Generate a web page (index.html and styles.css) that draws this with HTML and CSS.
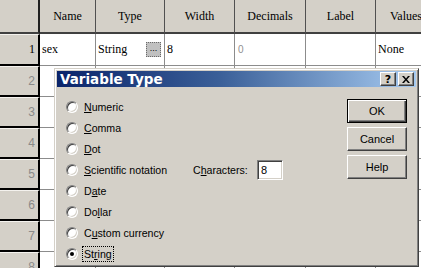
FILE: index.html
```html
<!DOCTYPE html>
<html>
<head>
<meta charset="utf-8">
<link rel="stylesheet" href="styles.css">
</head>
<body>
<div class="screen">
  <div class="grid">
    <div class="hd corner"></div>
    <div class="hd">Name</div>
    <div class="hd">Type</div>
    <div class="hd">Width</div>
    <div class="hd">Decimals</div>
    <div class="hd">Label</div>
    <div class="hd last">Values</div>

    <div class="rh first">1</div>
    <div class="cell">sex</div>
    <div class="cell type"><span>String</span><span class="ell">...</span></div>
    <div class="cell">8</div>
    <div class="cell dec">0</div>
    <div class="cell"></div>
    <div class="cell">None</div>

    <div class="rh">2</div><div class="cell"></div><div class="cell"></div><div class="cell"></div><div class="cell"></div><div class="cell"></div><div class="cell"></div>
    <div class="rh">3</div><div class="cell"></div><div class="cell"></div><div class="cell"></div><div class="cell"></div><div class="cell"></div><div class="cell"></div>
    <div class="rh">4</div><div class="cell"></div><div class="cell"></div><div class="cell"></div><div class="cell"></div><div class="cell"></div><div class="cell"></div>
    <div class="rh">5</div><div class="cell"></div><div class="cell"></div><div class="cell"></div><div class="cell"></div><div class="cell"></div><div class="cell"></div>
    <div class="rh">6</div><div class="cell"></div><div class="cell"></div><div class="cell"></div><div class="cell"></div><div class="cell"></div><div class="cell"></div>
    <div class="rh">7</div><div class="cell"></div><div class="cell"></div><div class="cell"></div><div class="cell"></div><div class="cell"></div><div class="cell"></div>
    <div class="rh">8</div><div class="cell"></div><div class="cell"></div><div class="cell"></div><div class="cell"></div><div class="cell"></div><div class="cell"></div>
  </div>

  <div class="dialog">
    <div class="titlebar">
      <span class="title">Variable Type</span>
      <span class="tbtns">
        <span class="tbtn">?</span>
        <span class="tbtn x">
          <svg width="8" height="7" viewBox="0 0 8 7"><path d="M0 0h2l2 2.5L6 0h2L5 3.5 8 7H6L4 4.5 2 7H0l3-3.5z" fill="#000"/></svg>
        </span>
      </span>
    </div>
    <div class="body">
      <div class="options">
        <label class="opt r1"><span class="radio"></span><span><u>N</u>umeric</span></label>
        <label class="opt r2"><span class="radio"></span><span><u>C</u>omma</span></label>
        <label class="opt r3"><span class="radio"></span><span><u>D</u>ot</span></label>
        <label class="opt r4"><span class="radio"></span><span><u>S</u>cientific notation</span></label>
        <label class="opt r5"><span class="radio"></span><span>D<u>a</u>te</span></label>
        <label class="opt r6"><span class="radio"></span><span>Do<u>l</u>lar</span></label>
        <label class="opt r7"><span class="radio"></span><span>C<u>u</u>stom currency</span></label>
        <label class="opt r8"><span class="radio on"></span><span class="focus">St<u>r</u>ing</span></label>
        <div class="chars">
          <span class="clabel">C<u>h</u>aracters:</span>
          <span class="field">8</span>
        </div>
      </div>
      <div class="buttons">
        <span class="btn default">OK</span>
        <span class="btn">Cancel</span>
        <span class="btn">Help</span>
      </div>
    </div>
  </div>
</div>
</body>
</html>
```

FILE: styles.css
```css
html, body {
  margin: 0;
  padding: 0;
  background: #fff;
}

.screen {
  position: relative;
  width: 421px;
  height: 268px;
  overflow: hidden;
  background: #fff;
}

.grid {
  display: grid;
  grid-template-columns: 40px 56px 69px 70px 71px 70px 62px;
  grid-template-rows: 34px 32px repeat(7, 31px);
  width: 438px;
  font-family: "Liberation Serif", serif;
  font-size: 12px;
  color: #000;
}

.hd {
  box-sizing: border-box;
  background: #d4d0c8;
  border-right: 1px solid #505050;
  border-bottom: 2px solid #404040;
  display: flex;
  align-items: center;
  justify-content: center;
  padding-top: 1px;
  white-space: nowrap;
  overflow: hidden;
}

.hd.corner {
  border-right: 2px solid #202020;
}

.hd.last {
  justify-content: flex-start;
  padding-left: 14px;
}

.rh {
  box-sizing: border-box;
  background: #d4d0c8;
  border-right: 2px solid #000;
  border-bottom: 2px solid #000;
  border-top: 1px solid #f4f2ee;
  display: flex;
  align-items: center;
  justify-content: flex-end;
  padding-right: 3px;
  font-family: "Liberation Sans", sans-serif;
  font-size: 12px;
  color: #8a8a8a;
}

.rh.first {
  font-family: "Liberation Serif", serif;
  color: #000;
}

.cell {
  box-sizing: border-box;
  border-right: 1px solid #8c8c8c;
  border-bottom: 1px solid #8c8c8c;
  display: flex;
  align-items: center;
  padding-left: 2px;
  white-space: nowrap;
}

.cell.type {
  justify-content: space-between;
  padding-right: 3px;
}

.ell {
  box-sizing: border-box;
  width: 15px;
  height: 15px;
  background: #c0c0c0;
  border: 1px dotted #6a6a6a;
  font-family: "Liberation Sans", sans-serif;
  font-size: 9px;
  line-height: 10px;
  text-align: center;
  color: #000;
}

.cell.dec {
  font-family: "Liberation Sans", sans-serif;
  font-size: 10px;
  color: #909090;
  padding-left: 3px;
}

/* Dialog */
.dialog {
  position: absolute;
  left: 54px;
  top: 68px;
  width: 365px;
  height: 199px;
  box-sizing: border-box;
  background: #d4d0c8;
  border: 1px solid;
  border-color: #d4d0c8 #404040 #404040 #d4d0c8;
  box-shadow: inset 1px 1px #fff, inset -1px -1px #808080;
  padding: 2px;
  display: flex;
  flex-direction: column;
  font-family: "Liberation Sans", sans-serif;
  font-size: 10.6px;
  color: #000;
}

.titlebar {
  height: 18px;
  background: linear-gradient(to right, #0a246a 0%, #3a5f98 45%, #a6caf0 100%);
  display: flex;
  align-items: center;
  justify-content: space-between;
  padding: 0 2px 0 3px;
}

.title {
  font-family: "DejaVu Sans", sans-serif;
  font-weight: bold;
  font-size: 13.5px;
  color: #fff;
}

.tbtns {
  display: flex;
  gap: 2px;
}

.tbtn {
  box-sizing: border-box;
  width: 16px;
  height: 14px;
  background: #d4d0c8;
  border: 1px solid;
  border-color: #fff #404040 #404040 #fff;
  box-shadow: inset -1px -1px #808080;
  display: flex;
  align-items: center;
  justify-content: center;
  font-family: "DejaVu Sans", sans-serif;
  font-weight: bold;
  font-size: 11px;
  line-height: 1;
}

.body {
  flex: 1;
  display: flex;
  padding: 9px 9px 0 9px;
}

.options {
  display: grid;
  grid-template-columns: 127px auto;
  grid-auto-rows: 21px;
}

.opt {
  grid-column: 1;
  display: flex;
  align-items: center;
  white-space: nowrap;
}

.r1 { grid-row: 1; }
.r2 { grid-row: 2; }
.r3 { grid-row: 3; }
.r4 { grid-row: 4; }
.r5 { grid-row: 5; }
.r6 { grid-row: 6; }
.r7 { grid-row: 7; }
.r8 { grid-row: 8; }

.radio {
  box-sizing: border-box;
  width: 12px;
  height: 12px;
  border-radius: 50%;
  background: #fff;
  border: 1px solid;
  border-color: #808080 #fff #fff #808080;
  box-shadow: inset 1px 1px #404040, inset -1px -1px #d4d0c8;
  margin-right: 6px;
  position: relative;
  flex: none;
}

.radio.on::after {
  content: "";
  position: absolute;
  left: 3px;
  top: 3px;
  width: 4px;
  height: 4px;
  border-radius: 50%;
  background: #000;
}

.focus {
  outline: 1px dotted #000;
  outline-offset: 1px;
}

.chars {
  grid-column: 2;
  grid-row: 4;
  display: flex;
  align-items: center;
  white-space: nowrap;
}

.clabel {
  width: 64px;
}

.field {
  box-sizing: border-box;
  width: 26px;
  height: 20px;
  background: #fff;
  border: 1px solid;
  border-color: #808080 #fff #fff #808080;
  box-shadow: inset 1px 1px #404040, inset -1px -1px #d4d0c8;
  padding-left: 3px;
  display: flex;
  align-items: center;
  font-size: 11px;
}

.buttons {
  margin-left: auto;
  display: flex;
  flex-direction: column;
  gap: 4px;
  padding-top: 3px;
}

.btn {
  box-sizing: border-box;
  width: 60px;
  height: 24px;
  background: #d4d0c8;
  border: 1px solid;
  border-color: #fff #404040 #404040 #fff;
  box-shadow: inset -1px -1px #808080;
  display: flex;
  align-items: center;
  justify-content: center;
  font-size: 11px;
}

.btn.default {
  border: 1px solid #000;
  box-shadow: inset 1px 1px #fff, inset -1px -1px #404040, inset -2px -2px #808080;
}
```
